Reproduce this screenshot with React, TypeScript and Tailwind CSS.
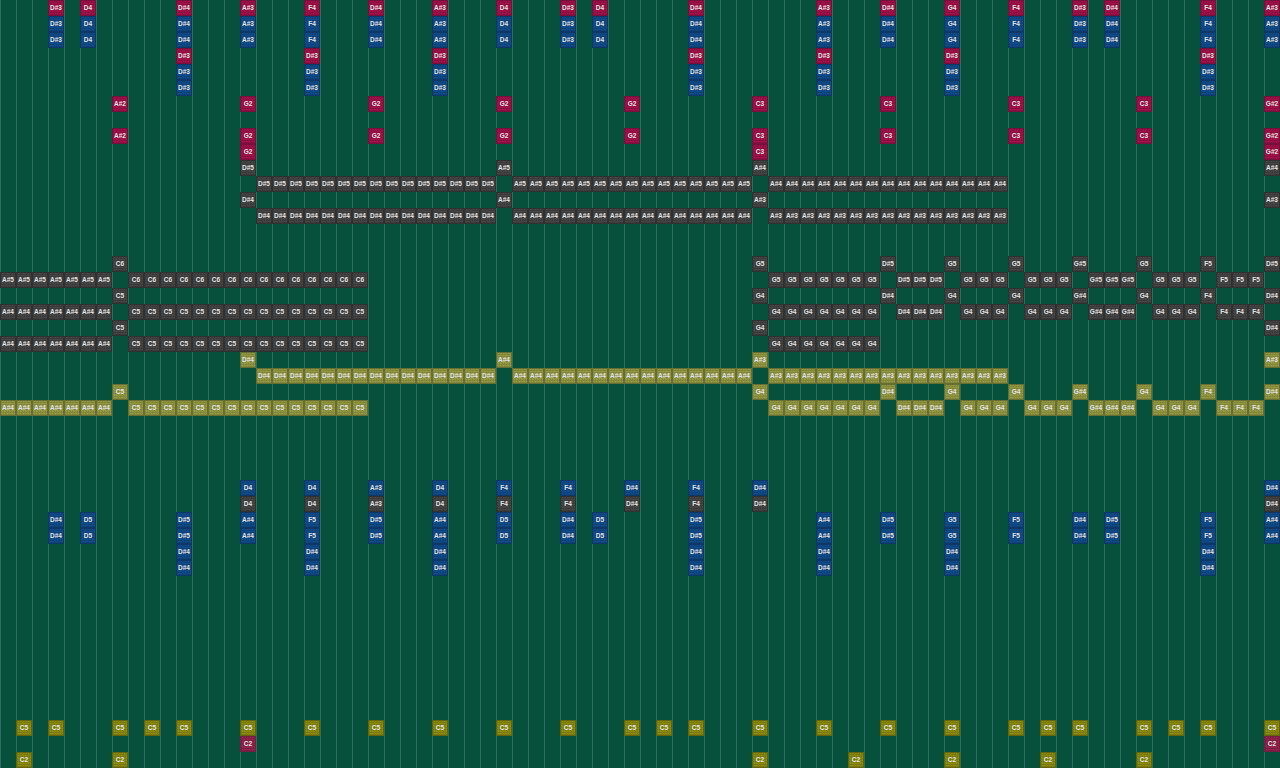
import React from "react";

const STYLES = {
  r: "border-[#780e3a] bg-[repeating-conic-gradient(#a5134b_0_25%,#8a0e40_0_50%)]",
  b: "border-[#0e3768] bg-[repeating-conic-gradient(#13508c_0_25%,#0d3f76_0_50%)]",
  g: "border-[#303030] bg-[repeating-conic-gradient(#4a4a4a_0_25%,#373737_0_50%)]",
  o: "border-[#686d30] bg-[repeating-conic-gradient(#9c9f48_0_25%,#7a8238_0_50%)]",
  y: "border-[#64650b] bg-[repeating-conic-gradient(#949412_0_25%,#72730c_0_50%)]",
  m: "border-[#7a1b43] bg-[repeating-conic-gradient(#982b51_0_25%,#771a3f_0_50%)]",
} as const;

type Kind = keyof typeof STYLES;
type Cell = [string, number, number?];
type Row = [number, Kind, Cell[]];

const top: Cell[] = [["D#3", 3], ["D4", 5], ["D#4", 11], ["A#3", 15], ["F4", 19], ["D#4", 23], ["A#3", 27], ["D4", 31], ["D#3", 35], ["D4", 37], ["D#4", 43], ["A#3", 51], ["D#4", 55], ["G4", 59], ["F4", 63], ["D#3", 67], ["D#4", 69], ["F4", 75], ["A#3", 79]];
const d3: Cell[] = [11, 19, 27, 43, 51, 59, 75].map((c) => ["D#3", c] as Cell);
const d4: Cell[] = [11, 19, 27, 43, 51, 59, 75].map((c) => ["D#4", c] as Cell);
const bass: Cell[] = [["A#2", 7], ["G2", 15], ["G2", 23], ["G2", 31], ["G2", 39], ["C3", 47], ["C3", 55], ["C3", 63], ["C3", 71], ["G#2", 79]];
const hi4: Cell[] = [["C5", 7], ["G4", 47], ["D#4", 55], ["G4", 59], ["G4", 63], ["G#4", 67], ["G4", 71], ["F4", 75], ["D#4", 79]];
const run4: Cell[] = [["A#4", 0, 6], ["C5", 8, 22], ["G4", 48, 54], ["D#4", 56, 58], ["G4", 60, 62], ["G4", 64, 66], ["G#4", 68, 70], ["G4", 72, 74], ["F4", 76, 78]];
const mid: Cell[] = [["D4", 15], ["D4", 19], ["A#3", 23], ["D4", 27], ["F4", 31], ["F4", 35], ["D#4", 39], ["F4", 43], ["D#4", 47], ["D#4", 79]];
const low: Cell[] = [["D#4", 3], ["D5", 5], ["D#5", 11], ["A#4", 15], ["F5", 19], ["D#5", 23], ["A#4", 27], ["D5", 31], ["D#4", 35], ["D5", 37], ["D#5", 43], ["A#4", 51], ["D#5", 55], ["G5", 59], ["F5", 63], ["D#4", 67], ["D#5", 69], ["F5", 75], ["A#4", 79]];

const ROWS: Row[] = [
  [0, "r", top],
  [1, "b", top],
  [2, "b", top],
  [3, "r", d3],
  [4, "b", d3],
  [5, "b", d3],
  [6, "r", bass],
  [8, "r", bass],
  [9, "r", [["G2", 15], ["C3", 47], ["G#2", 79]]],
  [10, "g", [["D#5", 15], ["A#5", 31], ["A#4", 47], ["A#4", 79]]],
  [11, "g", [["D#5", 16, 30], ["A#5", 32, 46], ["A#4", 48, 62]]],
  [12, "g", [["D#4", 15], ["A#4", 31], ["A#3", 47], ["A#3", 79]]],
  [13, "g", [["D#4", 16, 30], ["A#4", 32, 46], ["A#3", 48, 62]]],
  [16, "g", [["C6", 7], ["G5", 47], ["D#5", 55], ["G5", 59], ["G5", 63], ["G#5", 67], ["G5", 71], ["F5", 75], ["D#5", 79]]],
  [17, "g", [["A#5", 0, 6], ["C6", 8, 22], ["G5", 48, 54], ["D#5", 56, 58], ["G5", 60, 62], ["G5", 64, 66], ["G#5", 68, 70], ["G5", 72, 74], ["F5", 76, 78]]],
  [18, "g", hi4],
  [19, "g", run4],
  [20, "g", [["C5", 7], ["G4", 47], ["D#4", 79]]],
  [21, "g", [["A#4", 0, 6], ["C5", 8, 22], ["G4", 48, 54]]],
  [22, "o", [["D#4", 15], ["A#4", 31], ["A#3", 47], ["A#3", 79]]],
  [23, "o", [["D#4", 16, 30], ["A#4", 32, 46], ["A#3", 48, 62]]],
  [24, "o", hi4],
  [25, "o", run4],
  [30, "b", mid],
  [31, "g", mid],
  [32, "b", low],
  [33, "b", low],
  [34, "b", d4],
  [35, "b", d4],
  [45, "y", [1, 3, 7, 9, 11, 15, 19, 23, 27, 31, 35, 39, 41, 43, 47, 51, 55, 59, 63, 65, 67, 71, 73, 75, 79].map((c) => ["C5", c] as Cell)],
  [46, "m", [["C2", 15], ["C2", 79]]],
  [47, "y", [1, 7, 47, 53, 59, 65, 71].map((c) => ["C2", c] as Cell)],
];

function Note({ label, kind }: { label: string; kind: Kind }) {
  return (
    <div
      className={`flex h-4 w-4 items-center justify-center overflow-hidden border bg-[length:2.5px_2.5px] text-[6.5px] leading-none font-bold whitespace-nowrap text-[#e2e2e2] ${STYLES[kind]}`}
    >
      {label}
    </div>
  );
}

function RollRow({ kind, cells }: { kind?: Kind; cells: Cell[] }) {
  const byColumn = new Map<number, string>();
  for (const [label, from, to] of cells) {
    for (let c = from; c <= (to ?? from); c++) byColumn.set(c, label);
  }
  return (
    <div className="flex h-4">
      {Array.from({ length: 80 }, (_, c) => {
        const label = byColumn.get(c);
        return (
          <div key={c} className="h-4 w-4 shrink-0">
            {label && kind ? <Note label={label} kind={kind} /> : null}
          </div>
        );
      })}
    </div>
  );
}

export default function App() {
  const rows = new Map(ROWS.map((r) => [r[0], r]));
  return (
    <div className="h-[768px] w-[1280px] overflow-hidden bg-[#07503c] bg-[linear-gradient(90deg,#2f6e5b_1px,transparent_1px)] bg-[length:16px_16px] font-['Liberation_Sans',sans-serif]">
      {Array.from({ length: 48 }, (_, i) => {
        const row = rows.get(i);
        return <RollRow key={i} kind={row?.[1]} cells={row?.[2] ?? []} />;
      })}
    </div>
  );
}
